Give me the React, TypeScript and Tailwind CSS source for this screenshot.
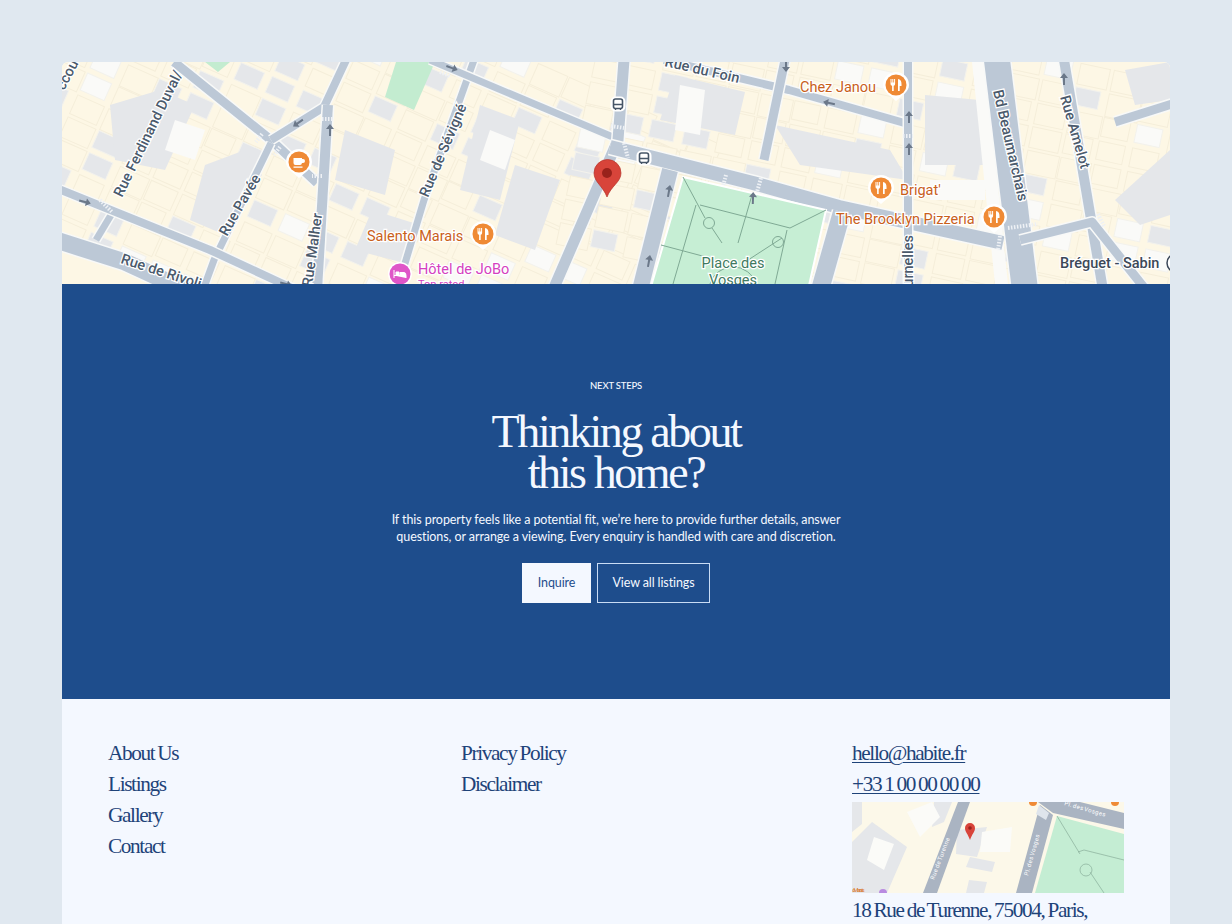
const SERIF = "font-['Liberation_Serif',serif]";
const SANS = "font-['Lato',sans-serif]";

const ROAD = "#bcc8d6";
const CREAM = "#fdf7e5";
const GRAY = "#e5e7ea";
const LINE = "#f5eeda";
const ORANGE = "#ef8a35";
const LABEL = "#4b5a6c";

// building footprints, laid out on two slanted grids
function hash(a: number, b: number) {
  const v = Math.sin(a * 12.9898 + b * 78.233) * 43758.5453;
  return v - Math.floor(v);
}

function Buildings({ cx, cy, angle, cols, rows }: { cx: number; cy: number; angle: number; cols: number; rows: number }) {
  const cells = [];
  for (let c = 0; c < cols; c++) {
    for (let r = 0; r < rows; r++) {
      const h = hash(c + cx, r + cy);
      const fill = h < 0.2 ? GRAY : h < 0.28 ? "#fafaf8" : CREAM;
      cells.push(
        <rect
          key={`${c}-${r}`}
          x={c * 34 - (cols * 34) / 2 + 2}
          y={r * 24 - (rows * 24) / 2 + 2}
          width={24 + h * 9}
          height={17 + h * 6}
          fill={fill}
          stroke={fill === CREAM ? LINE : "#f3f2ec"}
          strokeWidth="1"
        />,
      );
    }
  }
  return <g transform={`translate(${cx} ${cy}) rotate(${angle})`}>{cells}</g>;
}

function Road({ d, w = 9 }: { d: string; w?: number }) {
  return (
    <>
      <path d={d} fill="none" stroke="#f8f9f8" strokeWidth={w + 3} strokeLinejoin="round" />
      <path d={d} fill="none" stroke={ROAD} strokeWidth={w} strokeLinejoin="round" />
    </>
  );
}

function Crosswalk({ d }: { d: string }) {
  return <path d={d} fill="none" stroke="#eef1f5" strokeWidth="4" strokeDasharray="1.5 1.5" />;
}

function Arrow({ x, y, r }: { x: number; y: number; r: number }) {
  return (
    <path
      transform={`translate(${x} ${y}) rotate(${r})`}
      d="M0 -6 L4 -1 L1 -1 L1 6 L-1 6 L-1 -1 L-4 -1 Z"
      fill="#6b7889"
    />
  );
}

function Label({ x, y, r = 0, children, anchor = "start", size = 14.5, fill = LABEL, weight = 500 }: {
  x: number;
  y: number;
  r?: number;
  children: string;
  anchor?: "start" | "middle" | "end";
  size?: number;
  fill?: string;
  weight?: number;
}) {
  return (
    <text
      transform={`translate(${x} ${y}) rotate(${r})`}
      textAnchor={anchor}
      fontFamily="Roboto, sans-serif"
      fontSize={size}
      fontWeight={weight}
      fill={fill}
      stroke="#ffffff"
      strokeWidth="2.5"
      paintOrder="stroke"
    >
      {children}
    </text>
  );
}

function FoodPin({ x, y, kind = "food" }: { x: number; y: number; kind?: "food" | "cafe" }) {
  return (
    <g transform={`translate(${x} ${y})`}>
      <path d="M-13 0 A13 13 0 1 1 13 0 C13 7 6 10 0 16 C-6 10 -13 7 -13 0 Z" fill="#ffffff" />
      <circle r="10.5" fill={ORANGE} />
      {kind === "food" ? (
        <path
          d="M-5.5 -6 h1 v3.5 h.8 v-3.5 h1 v3.5 h.8 v-3.5 h1 v5 q0 1.5 -1.4 1.8 v5.2 h-1.6 v-5.2 q-1.6 -.3 -1.6 -1.8 Z M2 -6 q3.5 .5 3.5 5 v2 h-1.8 v5 h-1.7 Z"
          fill="#ffffff"
        />
      ) : (
        <path d="M-5.5 -4 h8.5 v1 h1 q2 0 2 2 t-2 2 h-1 q-.3 2 -2 2 h-4.5 q-2 0 -2 -2 Z M-5.5 4.5 h9 v1.2 h-9 Z" fill="#ffffff" />
      )}
    </g>
  );
}

function BusStop({ x, y }: { x: number; y: number }) {
  return (
    <g transform={`translate(${x} ${y})`}>
      <rect x="-7.5" y="-7.5" width="15" height="15" rx="5" fill="#ffffff" />
      <rect x="-4.5" y="-5" width="9" height="9.5" rx="2" fill="none" stroke="#465567" strokeWidth="1.6" />
      <path d="M-4 0.5 h8 M-2.5 5 v1 M2.5 5 v1" stroke="#465567" strokeWidth="1.4" />
    </g>
  );
}

function PlaceMap() {
  return (
    <svg viewBox="62 62 1108 222" className="block h-[222px] w-full" role="img" aria-label="Map of the Place des Vosges area">
      <rect x="62" y="62" width="1108" height="222" fill={CREAM} />
      <Buildings cx={340} cy={170} angle={24} cols={20} rows={15} />
      <Buildings cx={900} cy={170} angle={12} cols={19} rows={12} />

      {/* larger grey blocks */}
      <g fill={GRAY}>
        <path d="M110 105 L160 90 L195 105 L165 170 L115 160 Z" />
        <path d="M205 165 L245 150 L262 175 L225 235 L190 220 Z" />
        <path d="M345 130 L395 150 L385 195 L335 180 Z" />
        <path d="M372 210 L420 225 L400 262 L355 250 Z" />
        <path d="M480 105 L520 120 L500 200 L460 190 Z" />
        <path d="M515 165 L560 180 L535 250 L495 235 Z" />
        <path d="M675 75 L745 92 L735 135 L660 120 Z" />
        <path d="M775 125 L890 150 L908 180 L800 165 Z" />
        <path d="M925 95 L980 100 L985 165 L925 165 Z" />
        <path d="M1125 70 L1170 62 L1170 100 L1135 105 Z" />
        <path d="M1115 200 L1170 150 L1170 215 L1140 225 Z" />
      </g>
      <g fill="#fafaf8">
        <path d="M175 120 L205 130 L195 160 L165 150 Z" />
        <path d="M490 130 L515 140 L505 170 L480 160 Z" />
        <path d="M680 85 L705 90 L700 135 L675 130 Z" />
        <path d="M930 180 L985 180 L985 200 L930 200 Z" />
        <path d="M972 62 L985 62 L1008 284 L995 284 Z" />
      </g>

      <path d="M396 62 L435 62 L414 110 L385 97 Z" fill="#c3ecd0" />
      <path d="M205 62 L230 62 L218 72 Z" fill="#c3ecd0" />

      <Road d="M174 62 L271 140 L317 183" w={9} />
      <Road d="M271 140 L324 107 L346 60" w={8} />
      <Road d="M328 105 L317 290" w={10} />
      <Road d="M271 143 L214 260 L203 290" w={7} />
      <Road d="M114 210 L96 240" w={7} />
      <Road d="M56 188 L210 250 L296 290" w={8} />
      <Road d="M56 240 L125 262 L190 292" w={17} />
      <Road d="M474 60 L424 200 L397 290" w={7} />
      <Road d="M430 60 L620 140" w={7} />
      <Road d="M624 60 L618 140 L553 290" w={11} />
      <Road d="M610 147 L753 183 L839 207 L1003 243" w={14} />
      <Road d="M664 60 L789 90 L908 124" w={8} />
      <Road d="M785 60 L764 160" w={9} />
      <Road d="M908 60 L908 290" w={8} />
      <Road d="M997 60 L1025 290" w={26} />
      <Road d="M1064 60 L1103 290" w={10} />
      <Road d="M1020 240 L1092 222 L1146 290" w={9} />
      <Road d="M1115 122 L1172 104" w={9} />
      <Road d="M670 170 L640 290" w={16} />
      <Road d="M842 212 L820 290" w={18} />

      <g>
        <Crosswalk d="M262 134 L256 142" />
        <Crosswalk d="M280 147 L274 155" />
        <Crosswalk d="M322 119 L334 119" />
        <Crosswalk d="M322 176 L312 176" />
        <Crosswalk d="M611 126 L624 128" />
        <Crosswalk d="M624 143 L628 158" />
        <Crosswalk d="M726 175 L722 190" />
        <Crosswalk d="M761 178 L757 192" />
        <Crosswalk d="M903 136 L913 136" />
        <Crosswalk d="M1008 228 L1038 224" />
        <Crosswalk d="M1098 214 L1104 226" />
        <Crosswalk d="M1000 236 L998 250" />
        <Crosswalk d="M100 200 L112 212" />
        <Crosswalk d="M440 72 L450 76" />
      </g>

      <path d="M683 177 L826 210 L808 290 L650 290 Z" fill="#c6eed4" stroke="#ffffff" strokeWidth="2" />
      <g fill="none" stroke="#7fa994" strokeWidth="1">
        <path d="M683 177 L705 218 M712 228 L722 243 M700 205 L790 228 L826 210 M782 238 L745 262 M752 195 L738 243 M696 205 L673 284 M661 245 L710 258 M787 230 L775 284" />
        <circle cx="709" cy="223" r="5.5" />
        <circle cx="778" cy="242" r="5.5" />
        <path d="M710 284 A24 24 0 0 1 756 284" />
      </g>

      <Arrow x={85} y={202} r={105} />
      <Arrow x={298} y={123} r={235} />
      <Arrow x={330} y={130} r={0} />
      <Arrow x={452} y={68} r={110} />
      <Arrow x={286} y={284} r={105} />
      <Arrow x={786} y={66} r={180} />
      <Arrow x={829} y={103} r={-78} />
      <Arrow x={909} y={117} r={0} />
      <Arrow x={909} y={149} r={0} />
      <Arrow x={753} y={198} r={2} />
      <Arrow x={669} y={191} r={10} />
      <Arrow x={649} y={261} r={10} />
      <Arrow x={1064} y={79} r={0} />

      <Label x={122} y={198} r={-64}>Rue Ferdinand Duval/</Label>
      <Label x={227} y={237} r={-60}>Rue Pavée</Label>
      <Label x={312} y={287} r={-82}>Rue Malher</Label>
      <Label x={428} y={198} r={-67}>Rue de Sévigné</Label>
      <Label x={120} y={263} r={18}>Rue de Rivoli</Label>
      <Label x={64} y={91} r={-62}>ccou</Label>
      <Label x={664} y={66} r={13}>Rue du Foin</Label>
      <Label x={993} y={91} r={77}>Bd Beaumarchais</Label>
      <Label x={1060} y={97} r={74}>Rue Amelot</Label>
      <Label x={913} y={235} r={-90} anchor="end">Rue des Tournelles</Label>

      <Label x={367} y={241} fill="#c9601b" weight={400}>Salento Marais</Label>
      <Label x={800} y={92} fill="#c9601b" weight={400}>Chez Janou</Label>
      <Label x={900} y={195} fill="#c9601b" weight={400}>Brigat'</Label>
      <Label x={836} y={224} fill="#c9601b" weight={400}>The Brooklyn Pizzeria</Label>
      <Label x={418} y={274} fill="#d53fc0" weight={400}>Hôtel de JoBo</Label>
      <Label x={418} y={288} size={11} fill="#d53fc0" weight={400}>Top rated</Label>
      <Label x={733} y={268} anchor="middle" fill="#3f7a60" weight={400}>Place des</Label>
      <Label x={733} y={285} anchor="middle" fill="#3f7a60" weight={400}>Vosges</Label>
      <Label x={1060} y={268} fill="#3c4858">Bréguet - Sabin</Label>
      <circle cx="1176" cy="263" r="9" fill="#ffffff" stroke="#3c4858" strokeWidth="1.5" />

      <FoodPin x={896} y={85} />
      <FoodPin x={881} y={188} />
      <FoodPin x={994} y={217} />
      <FoodPin x={483} y={234} />
      <FoodPin x={299} y={162} kind="cafe" />

      <circle cx="400" cy="274" r="12" fill="#ffffff" />
      <circle cx="400" cy="274" r="10.5" fill="#df56c8" />
      <path d="M394 270 v8 M394 275.5 h12 v2.5 M396 272 h3 v3 h-3 Z M400 272.5 h4 q2 0 2 3 h-6 Z" fill="#ffffff" stroke="#ffffff" strokeWidth="1" />

      <BusStop x={618} y={104} />
      <BusStop x={644} y={158} />

      <path d="M607 197 C603 186 594 182 594 173 A13.5 13.5 0 0 1 621 173 C621 182 611 186 607 197 Z" fill="#d8443a" stroke="#b5352d" strokeWidth="0.7" />
      <circle cx="607" cy="173" r="5" fill="#99221b" />
    </svg>
  );
}

function MiniMap() {
  return (
    <svg viewBox="0 0 272 91" className="mt-[2px] block h-[91px] w-[272px]" role="img" aria-label="Map of 18 Rue de Turenne">
      <rect width="272" height="91" fill="#fcf8e9" />
      <g fill={GRAY}>
        <path d="M0 0 L10 0 L10 22 L0 30 Z" />
        <path d="M82 0 L100 0 L92 20 L80 25 Z" />
        <path d="M0 40 L20 20 L55 45 L35 91 L0 91 Z" />
        <path d="M105 28 L135 25 L125 55 L104 52 Z" />
        <path d="M118 55 L143 60 L140 70 L114 65 Z" />
        <path d="M117 78 L135 80 L132 91 L114 91 Z" />
      </g>
      <g fill="#fbfbf8">
        <path d="M22 35 L42 42 L32 68 L15 58 Z" />
        <path d="M55 10 L80 0 L88 15 L68 35 Z" />
        <path d="M130 30 L160 25 L158 50 L128 50 Z" />
      </g>
      <path d="M106 0 L118 0 L85 91 L71 91 Z" fill="#aab4c2" />
      <path d="M188 3 L201 13 L180 91 L164 91 Z" fill="#aab4c2" />
      <path d="M186 0 L228 0 L272 11 L272 27 L201 11 Z" fill="#aab4c2" />
      <path d="M187 3 L197 11 L194 18 L184 12 Z" fill="#dfe5ec" />
      <path d="M205 14 L272 32 L272 91 L183 91 Z" fill="#c4edd3" />
      <g fill="none" stroke="#88ad9a" strokeWidth="0.7">
        <path d="M205 14 L228 52 M226 50 L232 48 L272 58 M238 70 L252 91" />
        <circle cx="234" cy="68" r="6" />
      </g>
      <circle cx="181" cy="0" r="4" fill="#ef8a35" />
      <circle cx="263" cy="0" r="4" fill="#ef8a35" />
      <text transform="translate(212 3) rotate(16)" fontFamily="Roboto, sans-serif" fontSize="6" letterSpacing="0.4" fill="#ffffff">Pl. des Vosges</text>
      <text transform="translate(176 74) rotate(-74)" fontFamily="Roboto, sans-serif" fontSize="6" letterSpacing="0.4" fill="#ffffff">Pl. des Vosges</text>
      <text transform="translate(82 78) rotate(-69)" fontFamily="Roboto, sans-serif" fontSize="6" letterSpacing="0.4" fill="#ffffff">Rue de Turenne</text>
      <path d="M118 38 C116 32 113 30 113 26 A5 5 0 0 1 123 26 C123 30 120 32 118 38 Z" fill="#d8443a" />
      <circle cx="118" cy="26" r="1.8" fill="#99221b" />
      <text x="0" y="90" fontFamily="Roboto, sans-serif" fontSize="6" fill="#d9772d">o Marais</text>
      <circle cx="31" cy="91" r="4" fill="#b98be0" />
    </svg>
  );
}

function FooterLink({ children, underline = false }: { children: string; underline?: boolean }) {
  return (
    <a href="#" className={`block ${underline ? "underline decoration-1 underline-offset-2" : ""}`}>
      {children}
    </a>
  );
}

export default function App() {
  return (
    <div className="h-[924px] overflow-hidden bg-[#e0e8f0] px-[62px] pt-[62px]">
      <main className="overflow-hidden rounded-md bg-[#f4f8ff]">
        <PlaceMap />

        <section className="flex h-[415px] flex-col items-center justify-center bg-[#1e4d8c] text-[#f4f8ff]">
          <p className={`${SANS} text-[9.5px] font-medium leading-3 tracking-[-0.2px]`}>NEXT STEPS</p>
          <h2 className={`${SERIF} mt-[19px] text-center text-[46px] leading-[41px] tracking-[-2.4px]`}>
            Thinking about
            <br />
            this home?
          </h2>
          <p className={`${SANS} mt-[19px] text-center text-[12.5px] leading-[16.5px] tracking-[-0.08px]`}>
            If this property feels like a potential fit, we’re here to provide further details, answer
            <br />
            questions, or arrange a viewing. Every enquiry is handled with care and discretion.
          </p>
          <div className={`${SANS} mt-[18px] flex gap-[6px] text-[12.5px] tracking-[-0.1px]`}>
            <a href="#" className="flex h-10 w-[69px] items-center justify-center bg-[#f4f8ff] text-[#1e4d8c]">
              Inquire
            </a>
            <a href="#" className="flex h-10 w-[113px] items-center justify-center border border-[#c9dcf5] text-[#f4f8ff]">
              View all listings
            </a>
          </div>
        </section>

        <footer className={`${SERIF} grid grid-cols-[353px_391px_272px] px-[46px] pb-10 pt-[39px] text-[21.25px] leading-[31px] tracking-[-1.35px] [word-spacing:-1px] text-[#1e4379]`}>
          <nav>
            <FooterLink>About Us</FooterLink>
            <FooterLink>Listings</FooterLink>
            <FooterLink>Gallery</FooterLink>
            <FooterLink>Contact</FooterLink>
          </nav>
          <nav>
            <FooterLink>Privacy Policy</FooterLink>
            <FooterLink>Disclaimer</FooterLink>
          </nav>
          <div>
            <FooterLink underline>hello@habite.fr</FooterLink>
            <FooterLink underline>+33 1 00 00 00 00</FooterLink>
            <MiniMap />
            <p className="mt-[2px]">18 Rue de Turenne, 75004, Paris,</p>
          </div>
        </footer>
      </main>
    </div>
  );
}
